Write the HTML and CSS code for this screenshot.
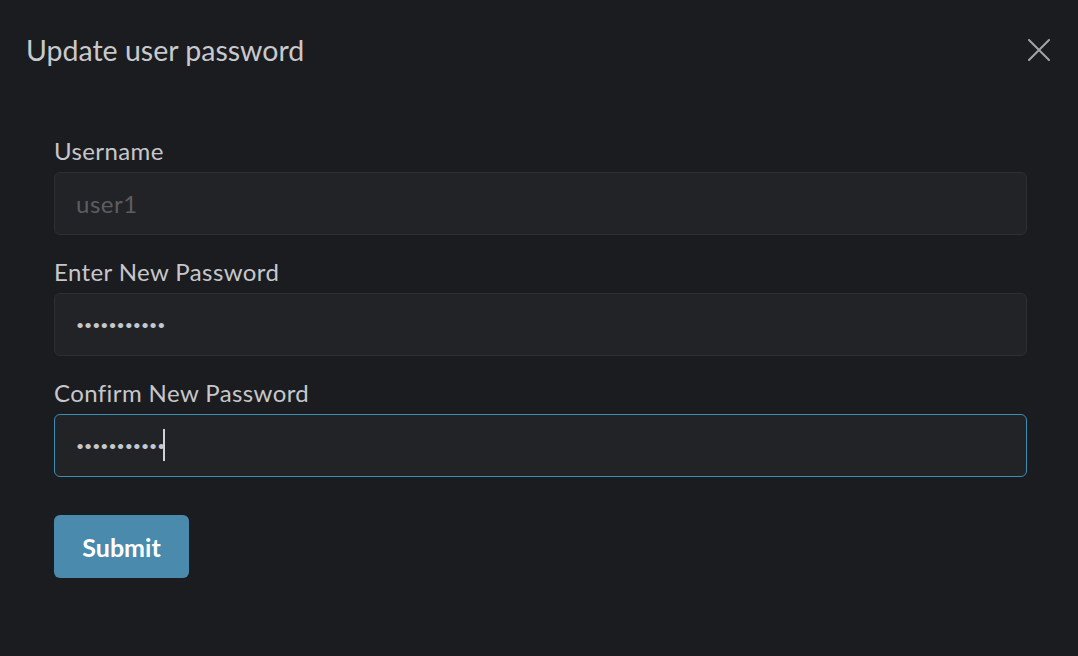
FILE: index.html
```html
<!DOCTYPE html>
<html lang="en">
<head>
<meta charset="utf-8">
<title>Update user password</title>
<link rel="stylesheet" href="styles.css">
</head>
<body>
<div class="modal">
  <header class="modal-header">
    <h1 class="modal-title">Update user password</h1>
    <button class="close-btn" type="button" aria-label="Close">
      <svg width="22" height="22" viewBox="0 0 22 22"><path d="M1 1 L21 21 M21 1 L1 21" stroke="#a3a4a8" stroke-width="2" stroke-linecap="round" fill="none"/></svg>
    </button>
  </header>
  <form class="modal-body">
    <label class="field-label" for="username">Username</label>
    <input class="field-input" id="username" type="text" value="user1" disabled>
    <label class="field-label" for="newpw">Enter New Password</label>
    <input class="field-input pw" id="newpw" type="password" value="password123">
    <label class="field-label" for="confirmpw">Confirm New Password</label>
    <div class="input-wrap">
      <input class="field-input pw focused" id="confirmpw" type="password" value="password123">
      <span class="caret"></span>
    </div>
    <button class="submit-btn" type="button">Submit</button>
  </form>
</div>
</body>
</html>
```
FILE: styles.css
```css
html, body {
  margin: 0;
  padding: 0;
  background: #1b1c20;
  height: 100%;
}
body {
  font-family: Lato, "Open Sans", sans-serif;
  color: #c6c7ca;
}
.modal {
  width: 1078px;
  height: 656px;
  box-sizing: border-box;
}
.modal-header {
  display: flex;
  align-items: center;
  justify-content: space-between;
  padding: 30px 28px 0 26px;
  height: 40px;
}
.modal-title {
  margin: 0;
  font-size: 28.5px;
  font-weight: 400;
  color: #c8c9cc;
  line-height: 40px;
}
.close-btn {
  background: none;
  border: 0;
  padding: 0;
  width: 22px;
  height: 22px;
  display: flex;
  cursor: pointer;
}
.modal-body {
  display: flex;
  flex-direction: column;
  padding: 64px 51px 0 54px;
}
.field-label {
  font-size: 24px;
  letter-spacing: 0.4px;
  line-height: 30px;
  padding-top: 2px;
  margin-bottom: 6px;
  color: #c6c7ca;
}
.field-input {
  box-sizing: border-box;
  width: 973px;
  height: 63px;
  background: #222327;
  border: 1px solid #2e2f33;
  border-radius: 6px;
  padding: 0 21px;
  font-family: Lato, "Open Sans", sans-serif;
  font-size: 24px;
  letter-spacing: 0.5px;
  color: #c6c7ca;
  outline: none;
  margin: 0 0 20px 0;
}
.field-input:disabled {
  color: #5c5d61;
}
.pw {
  letter-spacing: 0;
  font-size: 14px;
}
.input-wrap {
  position: relative;
  width: 973px;
}
.focused {
  border-color: #3d8db5;
  margin-bottom: 38px;
}
.caret {
  position: absolute;
  left: 109px;
  top: 15px;
  width: 2px;
  height: 32px;
  background: #d0d1d4;
}
.submit-btn {
  align-self: flex-start;
  width: 135px;
  height: 63px;
  background: #4a8bad;
  border: 0;
  border-radius: 6px;
  color: #ffffff;
  font-family: Lato, "Open Sans", sans-serif;
  font-weight: 700;
  font-size: 25px;
  cursor: pointer;
}
```
